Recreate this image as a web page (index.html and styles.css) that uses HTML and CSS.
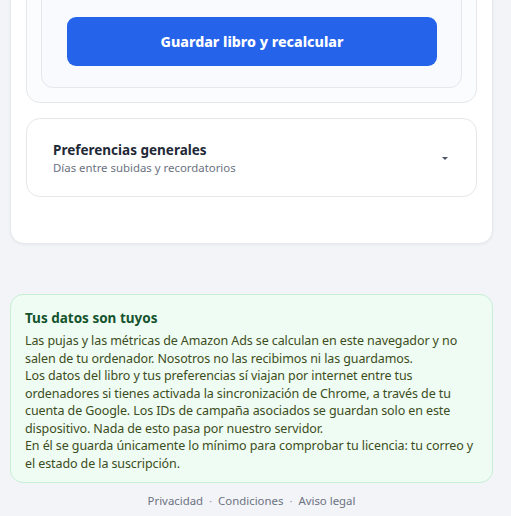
FILE: index.html
```html
<!DOCTYPE html>
<html lang="es">
<head>
<meta charset="utf-8">
<title>Ajustes</title>
<link rel="stylesheet" href="styles.css">
</head>
<body>
<div class="page">
  <div class="main-card">
    <section class="section-card">
      <div class="book-box">
        <div class="book-fields"></div>
        <button class="btn-primary" type="button">Guardar libro y recalcular</button>
      </div>
    </section>
    <section class="pref-card">
      <div class="pref-text">
        <div class="pref-title">Preferencias generales</div>
        <div class="pref-sub">Días entre subidas y recordatorios</div>
      </div>
      <span class="caret"></span>
    </section>
  </div>

  <aside class="privacy">
    <h2 class="privacy-title">Tus datos son tuyos</h2>
    <p class="privacy-p">Las pujas y las métricas de Amazon Ads se calculan en este navegador y no salen de tu ordenador. Nosotros no las recibimos ni las guardamos.</p>
    <p class="privacy-p">Los datos del libro y tus preferencias sí viajan por internet entre tus ordenadores si tienes activada la sincronización de Chrome, a través de tu cuenta de Google. Los IDs de campaña asociados se guardan solo en este dispositivo. Nada de esto pasa por nuestro servidor.</p>
    <p class="privacy-p">En él se guarda únicamente lo mínimo para comprobar tu licencia: tu correo y el estado de la suscripción.</p>
  </aside>

  <footer class="footer">
    <a class="footer-link" href="#">Privacidad</a>
    <span class="footer-dot">·</span>
    <a class="footer-link" href="#">Condiciones</a>
    <span class="footer-dot">·</span>
    <a class="footer-link" href="#">Aviso legal</a>
  </footer>
</div>
</body>
</html>
```

FILE: styles.css
```css
html, body {
  margin: 0;
  padding: 0;
}
body {
  background: #f3f4f8;
  font-family: "Noto Sans", "Open Sans", sans-serif;
  color: #1f2937;
}
.page {
  width: 483px;
  margin: -112px 0 0 10px;
}
.main-card {
  background: #ffffff;
  border: 1px solid #e6e8ee;
  border-radius: 14px;
  box-shadow: 0 1px 3px rgba(15, 23, 42, 0.05);
  padding: 16px 15px 46px 15px;
  display: flex;
  flex-direction: column;
  gap: 15px;
}
.section-card {
  background: #fbfcfe;
  border: 1px solid #e5e7eb;
  border-radius: 14px;
  padding: 14px;
}
.book-box {
  background: #f8fafd;
  border: 1px solid #e3e7ee;
  border-radius: 12px;
  padding: 0 24px 21px 25px;
}
.book-fields {
  height: 96px;
}
.btn-primary {
  display: block;
  width: 100%;
  height: 49px;
  border: 0;
  border-radius: 9px;
  background: #2563eb;
  color: #ffffff;
  font-family: "Noto Sans", sans-serif;
  font-weight: 800;
  font-size: 14.2px;
  cursor: pointer;
}
.pref-card {
  background: #ffffff;
  border: 1px solid #e5e7eb;
  border-radius: 14px;
  height: 77px;
  padding: 0 28px 0 26px;
  display: flex;
  align-items: center;
  justify-content: space-between;
}
.pref-title {
  font-weight: 700;
  font-size: 13.5px;
  line-height: 18px;
  color: #1f2937;
  margin-top: 2px;
}
.pref-sub {
  font-size: 11.4px;
  line-height: 17px;
  color: #6b7280;
}
.caret {
  width: 0;
  height: 0;
  border-left: 3px solid transparent;
  border-right: 3px solid transparent;
  border-top: 3px solid #4b5563;
  margin-top: 1px;
}
.privacy {
  margin-top: 50px;
  background: #effcf3;
  border: 1px solid #c6efd5;
  border-radius: 13px;
  padding: 14px 14px 10px 14px;
}
.privacy-title {
  margin: 0 0 5px 0;
  font-size: 13.5px;
  line-height: 18px;
  font-weight: 700;
  color: #14532d;
}
.privacy-p {
  margin: 0;
  font-size: 12.5px;
  letter-spacing: -0.1px;
  line-height: 17.5px;
  color: #3d4d22;
}
.footer {
  padding: 9px 0;
  text-align: center;
  font-size: 11.4px;
  line-height: 18px;
  color: #6b7280;
}
.footer-link {
  color: #6b7280;
  text-decoration: none;
}
.footer-dot {
  color: #9ca3af;
  margin: 0 3px;
}
```
